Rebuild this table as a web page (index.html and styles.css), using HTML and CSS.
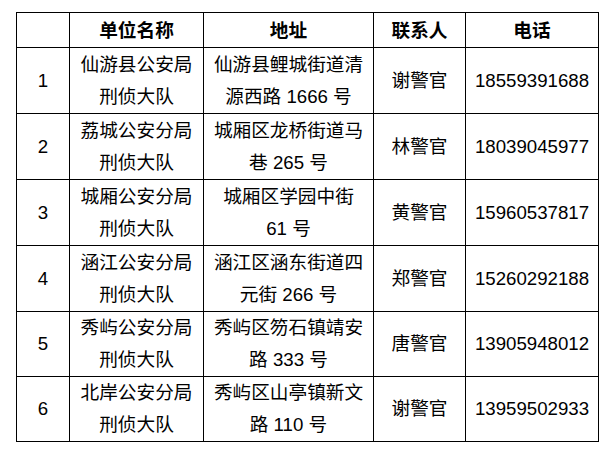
FILE: index.html
```html
<!DOCTYPE html>
<html lang="zh-CN">
<head>
<meta charset="utf-8">
<title>联系表</title>
<link rel="stylesheet" href="styles.css">
</head>
<body>
<table class="contacts">
  <colgroup>
    <col class="c-no">
    <col class="c-unit">
    <col class="c-addr">
    <col class="c-person">
    <col class="c-phone">
  </colgroup>
  <thead>
    <tr class="head">
      <th></th>
      <th>单位名称</th>
      <th>地址</th>
      <th>联系人</th>
      <th>电话</th>
    </tr>
  </thead>
  <tbody>
    <tr>
      <td>1</td>
      <td>仙游县公安局<br>刑侦大队</td>
      <td>仙游县鲤城街道清<br>源西路 1666 号</td>
      <td>谢警官</td>
      <td>18559391688</td>
    </tr>
    <tr>
      <td>2</td>
      <td>荔城公安分局<br>刑侦大队</td>
      <td>城厢区龙桥街道马<br>巷 265 号</td>
      <td>林警官</td>
      <td>18039045977</td>
    </tr>
    <tr>
      <td>3</td>
      <td>城厢公安分局<br>刑侦大队</td>
      <td>城厢区学园中街<br>61 号</td>
      <td>黄警官</td>
      <td>15960537817</td>
    </tr>
    <tr>
      <td>4</td>
      <td>涵江公安分局<br>刑侦大队</td>
      <td>涵江区涵东街道四<br>元街 266 号</td>
      <td>郑警官</td>
      <td>15260292188</td>
    </tr>
    <tr class="short">
      <td>5</td>
      <td>秀屿公安分局<br>刑侦大队</td>
      <td>秀屿区笏石镇靖安<br>路 333 号</td>
      <td>唐警官</td>
      <td>13905948012</td>
    </tr>
    <tr class="short">
      <td>6</td>
      <td>北岸公安分局<br>刑侦大队</td>
      <td>秀屿区山亭镇新文<br>路 110 号</td>
      <td>谢警官</td>
      <td>13959502933</td>
    </tr>
  </tbody>
</table>
</body>
</html>
```

FILE: styles.css
```css
html, body {
  margin: 0;
  padding: 0;
  background: #ffffff;
}
body {
  padding: 12px 0 0 16px;
  font-family: "Liberation Sans", "Noto Sans CJK SC", sans-serif;
  font-size: 18.67px;
  color: #000000;
}
.contacts {
  border-collapse: collapse;
  table-layout: fixed;
  width: 582px;
}
.c-no { width: 53px; }
.c-unit { width: 134px; }
.c-addr { width: 170px; }
.c-person { width: 92px; }
.c-phone { width: 133px; }
.contacts th,
.contacts td {
  border: 1px solid #000000;
  padding: 0;
  text-align: center;
  vertical-align: middle;
  line-height: 32px;
  white-space: nowrap;
}
.contacts th {
  font-weight: bold;
  height: 33px;
  padding-top: 2px;
  box-sizing: border-box;
}
.contacts td {
  height: 65px;
}
.contacts tr.short td {
  height: 64px;
}
```
